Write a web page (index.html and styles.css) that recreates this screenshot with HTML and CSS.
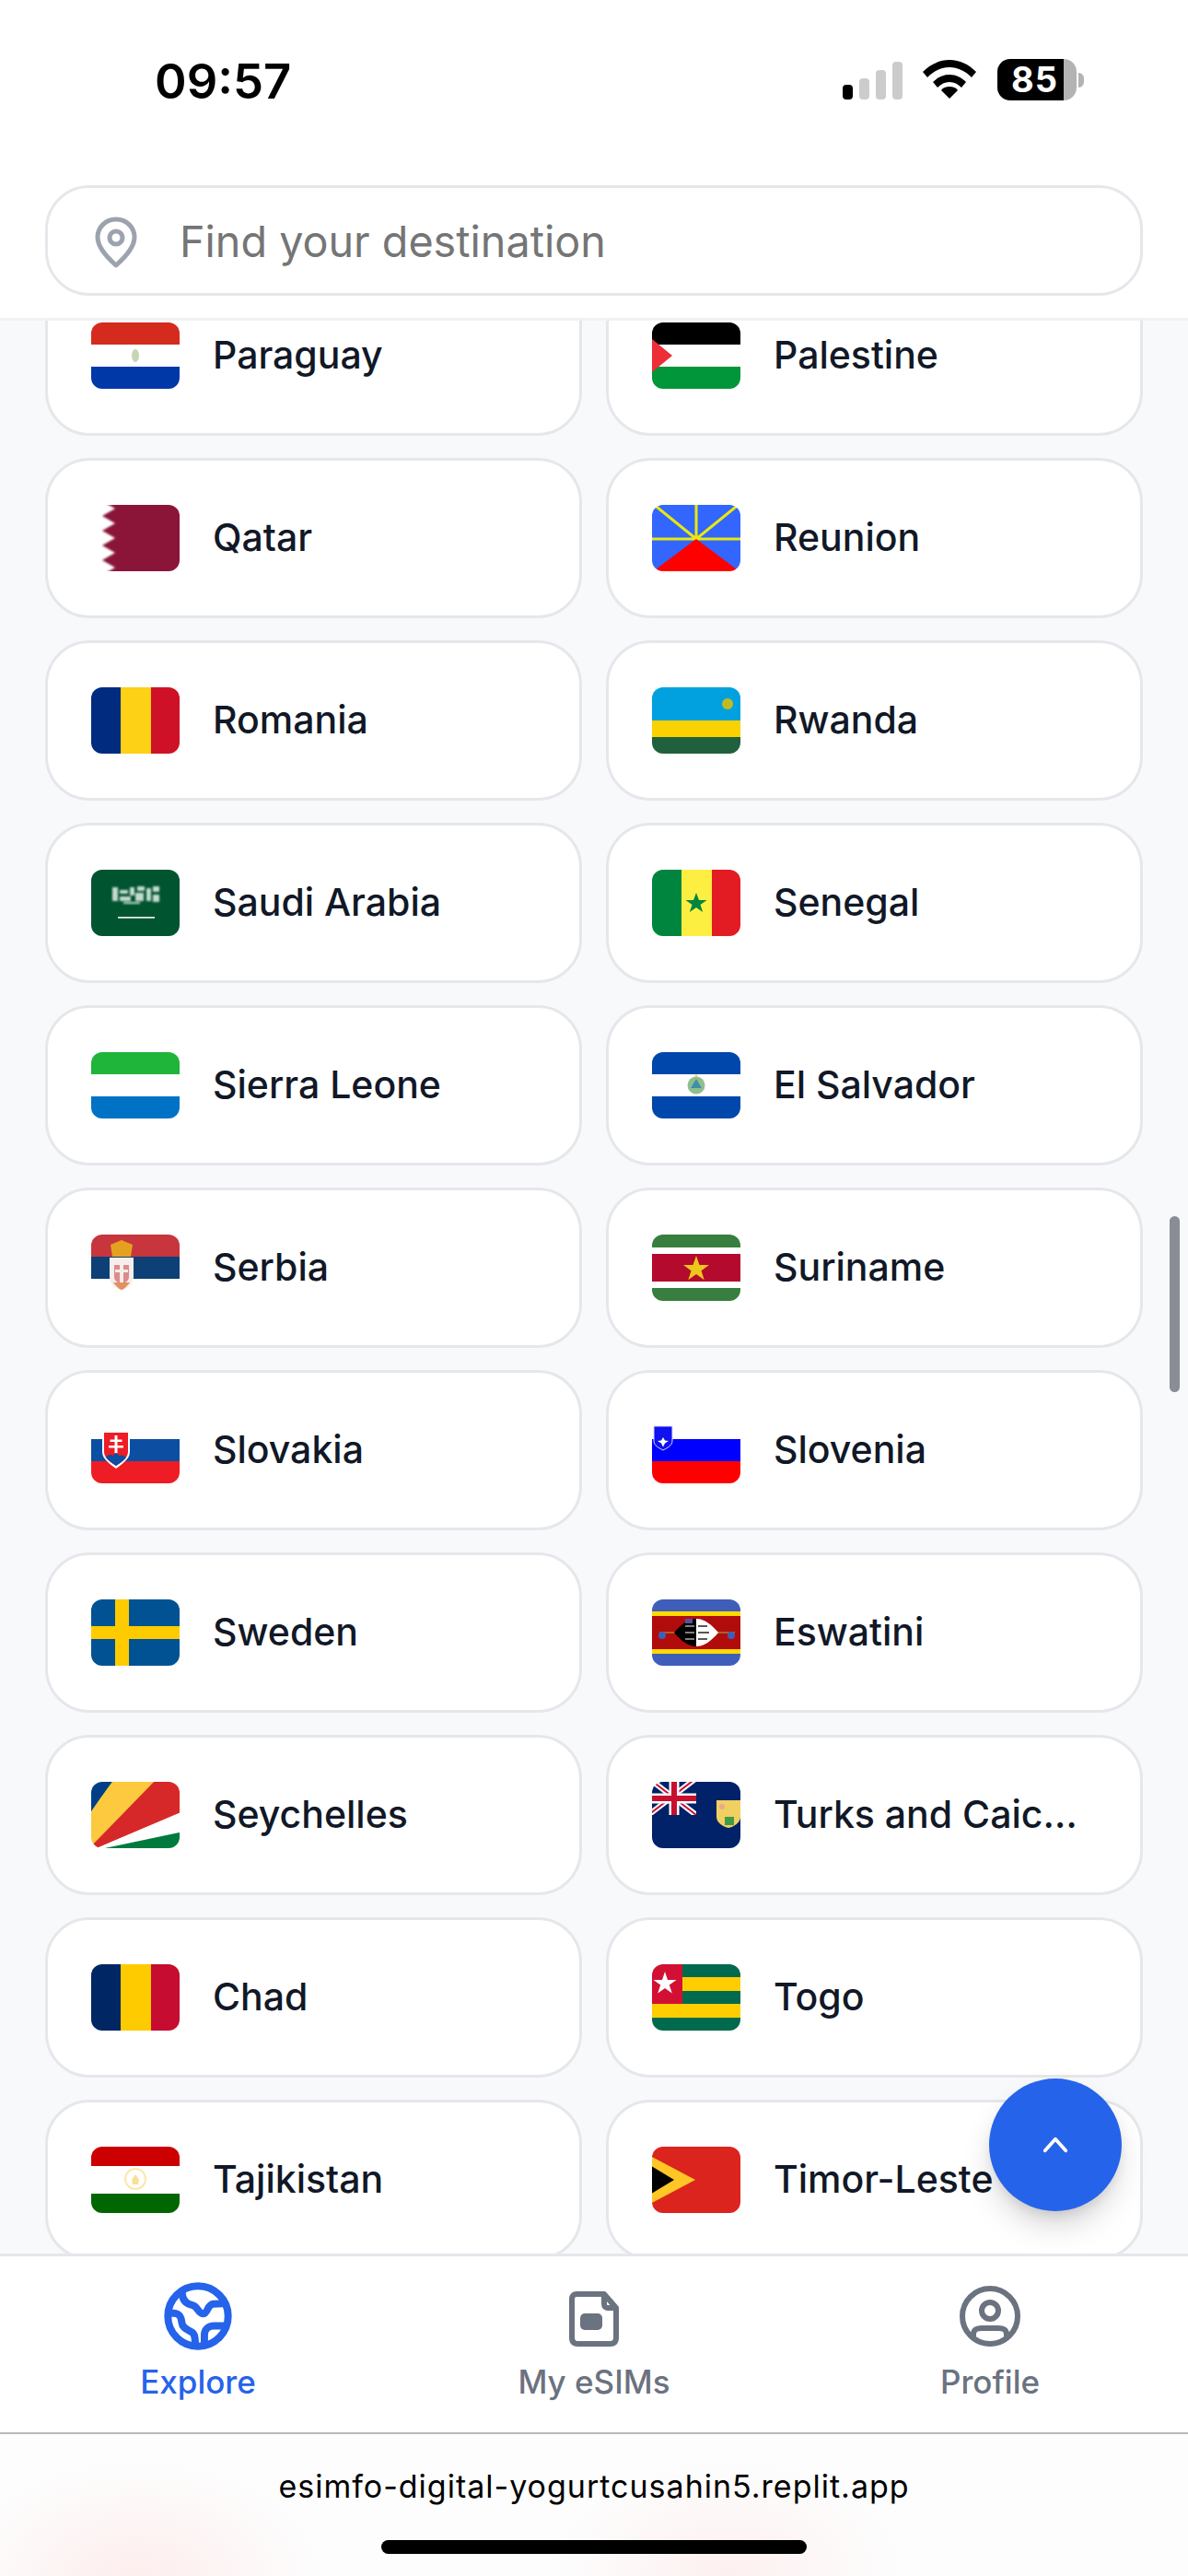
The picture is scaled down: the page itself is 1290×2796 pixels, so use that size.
FILE: index.html
```html
<!DOCTYPE html>
<html lang="en">
<head>
<meta charset="utf-8">
<title>Find your destination</title>
<link rel="stylesheet" href="styles.css">
</head>
<body>
<div class="app">
  <div class="status">
    <span class="time">09:57</span>
    <div class="status-icons">
      <div class="signal"><i class="bar b1"></i><i class="bar b2"></i><i class="bar b3"></i><i class="bar b4"></i></div>
      <svg class="wifi" viewBox="0 0 58 42"><path d="M0 13C8 5 18 0 29 0s21 5 29 13l-5 6C46 12 38 8 29 8s-17 4-24 11z"/><path d="M11 24c5-5 11-8 18-8s13 3 18 8l-5 6c-4-4-8-6-13-6s-9 2-13 6z"/><path d="M20 33c2-3 5-4 9-4s7 1 9 4l-9 9z"/></svg>
      <div class="battery"><div class="battery-body"><span class="battery-num">85</span></div><i class="battery-cap"></i></div>
    </div>
  </div>
  <header class="search-wrap">
    <div class="search">
      <svg class="pin" viewBox="0 0 46 56" fill="none" stroke="#9ca3af" stroke-width="5"><path d="M23 3C12 3 3 11.500 3 22.500 3 34 14 45 23 53c9-8 20-19 20-30.500C43 11.500 34 3 23 3z" stroke-linejoin="round"/><circle cx="23" cy="23" r="7"/></svg>
      <span class="placeholder">Find your destination</span>
    </div>
  </header>
  <main class="list-area">
    <div class="grid">
      <div class="card"><svg class="flag" viewBox="0 0 96 72"><g class="art"><rect x="-4" y="-4" width="104" height="28" fill="#d52b1e"/><rect x="-4" y="24" width="104" height="24" fill="#fff"/><rect x="-4" y="48" width="104" height="28" fill="#0038a8"/><ellipse cx="48" cy="36" rx="4" ry="7" fill="#c5d6b5"/></g></svg><span class="name">Paraguay</span></div>
      <div class="card"><svg class="flag" viewBox="0 0 96 72"><g class="art"><rect x="-4" y="-4" width="104" height="28" fill="#000"/><rect x="-4" y="24" width="104" height="24" fill="#fff"/><rect x="-4" y="48" width="104" height="28" fill="#009639"/><path d="M-4 18 0 18 22 36 0 54-4 54z" fill="#ed2e38"/></g></svg><span class="name">Palestine</span></div>
      <div class="card"><svg class="flag" viewBox="0 0 96 72"><g class="art soft"><rect x="-4" y="-4" width="104" height="80" fill="#fff"/><path d="M100-4V76H12L26 68 12 60 26 52 12 44 26 36 12 28 26 20 12 12 26 4 12-4z" fill="#8a1538"/></g></svg><span class="name">Qatar</span></div>
      <div class="card"><svg class="flag" viewBox="0 0 96 72"><g class="art"><rect x="-4" y="-4" width="104" height="80" fill="#3366ff"/><g stroke="#e8e810" stroke-width="3"><path d="M48 37H-4M48 37H100M48 37V-4M48 37 0-2M48 37 96-2"/></g><path d="M48 37 100 76H-4z" fill="#ff0000"/></g></svg><span class="name">Reunion</span></div>
      <div class="card"><svg class="flag" viewBox="0 0 96 72"><g class="art"><rect x="-4" y="-4" width="36" height="80" fill="#002b7f"/><rect x="32" y="-4" width="33" height="80" fill="#fcd116"/><rect x="65" y="-4" width="35" height="80" fill="#ce1126"/></g></svg><span class="name">Romania</span></div>
      <div class="card"><svg class="flag" viewBox="0 0 96 72"><g class="art"><rect x="-4" y="-4" width="104" height="40" fill="#00a1de"/><rect x="-4" y="36" width="104" height="18" fill="#fad201"/><rect x="-4" y="54" width="104" height="22" fill="#20603d"/><circle cx="82" cy="18" r="6" fill="#e5be01" opacity=".85"/></g></svg><span class="name">Rwanda</span></div>
      <div class="card"><svg class="flag" viewBox="0 0 96 72"><g class="art"><rect x="-4" y="-4" width="104" height="80" fill="#005430"/><g class="saudi" fill="#c4dace"><rect x="23" y="19" width="6" height="15"/><rect x="31" y="22" width="9" height="4"/><rect x="31" y="29" width="12" height="5"/><rect x="42" y="19" width="5" height="9"/><rect x="48" y="25" width="9" height="9"/><rect x="50" y="18" width="8" height="5"/><rect x="60" y="20" width="5" height="14"/><rect x="67" y="18" width="7" height="6"/><rect x="67" y="27" width="7" height="8"/><rect x="35" y="35" width="18" height="2"/></g><rect x="29" y="51" width="40" height="1.800" fill="#dfeae4"/></g></svg><span class="name">Saudi Arabia</span></div>
      <div class="card"><svg class="flag" viewBox="0 0 96 72"><g class="art"><rect x="-4" y="-4" width="36" height="80" fill="#00853f"/><rect x="32" y="-4" width="33" height="80" fill="#fdef42"/><rect x="65" y="-4" width="35" height="80" fill="#e31b23"/><path d="M48 25l3 8h8.500l-7 5 2.700 8L48 41l-7.200 5 2.700-8-7-5H45z" fill="#00853f"/></g></svg><span class="name">Senegal</span></div>
      <div class="card"><svg class="flag" viewBox="0 0 96 72"><g class="art"><rect x="-4" y="-4" width="104" height="28" fill="#1eb53a"/><rect x="-4" y="24" width="104" height="24" fill="#fff"/><rect x="-4" y="48" width="104" height="28" fill="#0072c6"/></g></svg><span class="name">Sierra Leone</span></div>
      <div class="card"><svg class="flag" viewBox="0 0 96 72"><g class="art"><rect x="-4" y="-4" width="104" height="28" fill="#0047ab"/><rect x="-4" y="24" width="104" height="24" fill="#fff"/><rect x="-4" y="48" width="104" height="28" fill="#0047ab"/><circle cx="48" cy="36" r="9.500" fill="#8fbf8f"/><path d="M48 29 54 39H42z" fill="#3f8fa8"/><circle cx="48" cy="26" r="1.500" fill="#e8c860"/></g></svg><span class="name">El Salvador</span></div>
      <div class="card"><svg class="flag" viewBox="0 0 96 72"><g class="art"><rect x="-4" y="-4" width="104" height="28" fill="#c6363c"/><rect x="-4" y="24" width="104" height="24" fill="#0c4076"/><rect x="-4" y="48" width="104" height="28" fill="#fff"/><path d="M21 11 33 6 45 11 43 24H23z" fill="#e4a11f"/><path d="M20 25H46V46C46 54 38 60 33 60 28 60 20 54 20 46z" fill="#f6eeec"/><path d="M25 33H41V46C41 50 37 53 33 53 29 53 25 50 25 46z" fill="#dd8a8c"/><path d="M31 31H35V54H31zM26 38H40V41H26z" fill="#f6eeec"/><path d="M24 52C27 56 31 60 33 60 35 60 39 56 42 52z" fill="#e0793a" opacity=".8"/></g></svg><span class="name">Serbia</span></div>
      <div class="card"><svg class="flag" viewBox="0 0 96 72"><g class="art"><rect x="-4" y="-4" width="104" height="18" fill="#377e3f"/><rect x="-4" y="14" width="104" height="7" fill="#fff"/><rect x="-4" y="21" width="104" height="30" fill="#b40a2d"/><rect x="-4" y="51" width="104" height="7" fill="#fff"/><rect x="-4" y="58" width="104" height="18" fill="#377e3f"/><path d="M48 23l3.500 10H62l-8.500 6.300 3.200 10L48 43l-8.700 6.300 3.200-10L34 33h10.500z" fill="#ecc81d"/></g></svg><span class="name">Suriname</span></div>
      <div class="card"><svg class="flag" viewBox="0 0 96 72"><g class="art"><rect x="-4" y="-4" width="104" height="28" fill="#fff"/><rect x="-4" y="24" width="104" height="24" fill="#0b4ea2"/><rect x="-4" y="48" width="104" height="28" fill="#ee1c25"/><path d="M12 15H42V38C42 46 32 52 27 56 22 52 12 46 12 38z" fill="#fff"/><path d="M14 17H40V38C40 45 31 50 27 53 23 50 14 45 14 38z" fill="#ee1c25"/><path d="M25.500 20h3v4.500h5v2.500h-5v4h6.500v2.500h-6.500v6h-3v-6H19v-2.500h6.500v-4h-5v-2.500h5z" fill="#fff"/><path d="M16 44c3-4 6-3 8-2 2-4 4-4 6 0 3-1 5-1 8 2-3 4-8 7-11 9-3-2-8-5-11-9z" fill="#0b4ea2"/></g></svg><span class="name">Slovakia</span></div>
      <div class="card"><svg class="flag" viewBox="0 0 96 72"><g class="art"><rect x="-4" y="-4" width="104" height="28" fill="#fff"/><rect x="-4" y="24" width="104" height="24" fill="#0000ff"/><rect x="-4" y="48" width="104" height="28" fill="#ff0000"/><path d="M2 10H22V26C22 31 16 34 12 36 8 34 2 31 2 26z" fill="#1010f0" stroke="#d8d8ff" stroke-width="1"/><path d="M12 22l2 3.500 4 .5-4 2.500-2 4-2-4-4-2.500 4-.5z" fill="#fff"/></g></svg><span class="name">Slovenia</span></div>
      <div class="card"><svg class="flag" viewBox="0 0 96 72"><g class="art"><rect x="-4" y="-4" width="104" height="80" fill="#005293"/><rect x="26" y="-4" width="15" height="80" fill="#fecb00"/><rect x="-4" y="29" width="104" height="14" fill="#fecb00"/></g></svg><span class="name">Sweden</span></div>
      <div class="card"><svg class="flag" viewBox="0 0 96 72"><g class="art"><rect x="-4" y="-4" width="104" height="80" fill="#3e5eb9"/><rect x="-4" y="13" width="104" height="46" fill="#ffd900"/><rect x="-4" y="18" width="104" height="36" fill="#b10c0c"/><path d="M8 36H90" stroke="#a8622a" stroke-width="2"/><circle cx="11" cy="39" r="4" fill="#3e5eb9"/><circle cx="86" cy="39" r="4" fill="#3e5eb9"/><path d="M24 36C34 24 42 21 48 21V51C42 51 34 48 24 36z" fill="#000"/><path d="M72 36C62 24 54 21 48 21V51C54 51 62 48 72 36z" fill="#fff"/><path d="M36 29H46M36 36H46M36 43H46" stroke="#aaa" stroke-width="1.500"/><path d="M50 29H60M50 36H62M50 43H60" stroke="#222" stroke-width="1.500"/><rect x="36" y="21" width="8" height="5" fill="#5a4ea0"/></g></svg><span class="name">Eswatini</span></div>
      <div class="card"><svg class="flag" viewBox="0 0 96 72"><g class="art"><rect x="-4" y="-4" width="104" height="80" fill="#007a3d"/><path d="M-4 76 100 30V54z" fill="#fff"/><path d="M-4 74-4 60 68-4H100V32L-4 76z" fill="#d62828"/><path d="M-4 74V36L26-4H72z" fill="#fcc93f"/><path d="M-4-4H25L-4 38z" fill="#003f87"/></g></svg><span class="name">Seychelles</span></div>
      <div class="card"><svg class="flag" viewBox="0 0 96 72"><g class="art"><rect x="-4" y="-4" width="104" height="80" fill="#012169"/><path d="M-4 -4 48 36M48 -4-4 36" stroke="#fff" stroke-width="6"/><path d="M-4 -4 48 36M48 -4-4 36" stroke="#c8102e" stroke-width="2"/><path d="M24-4V36M-4 18H48" stroke="#fff" stroke-width="11"/><path d="M24-4V36M-4 18H48" stroke="#c8102e" stroke-width="6"/><rect x="48" y="-4" width="4" height="44" fill="#012169"/><rect x="-4" y="36" width="56" height="4" fill="#012169"/><path d="M70 20H96V38C96 45 88 49 83 50 78 49 70 45 70 38z" fill="#f0d060"/><rect x="79" y="38" width="10" height="9" fill="#3f9a4a"/><circle cx="76" cy="27" r="3" fill="#e8a890"/></g></svg><span class="name">Turks and Caicos Islands</span></div>
      <div class="card"><svg class="flag" viewBox="0 0 96 72"><g class="art"><rect x="-4" y="-4" width="36" height="80" fill="#002664"/><rect x="32" y="-4" width="33" height="80" fill="#fecb00"/><rect x="65" y="-4" width="35" height="80" fill="#c60c30"/></g></svg><span class="name">Chad</span></div>
      <div class="card"><svg class="flag" viewBox="0 0 96 72"><g class="art"><rect x="-4" y="-4" width="104" height="18" fill="#006a4e"/><rect x="-4" y="14" width="104" height="15" fill="#ffce00"/><rect x="-4" y="29" width="104" height="14" fill="#006a4e"/><rect x="-4" y="43" width="104" height="15" fill="#ffce00"/><rect x="-4" y="58" width="104" height="18" fill="#006a4e"/><rect x="-4" y="-4" width="37" height="47" fill="#d21034"/><path d="M14 8l3 9h9.500l-7.700 5.500 3 9L14 26l-7.800 5.500 3-9L1.500 17H11z" fill="#fff"/></g></svg><span class="name">Togo</span></div>
      <div class="card"><svg class="flag" viewBox="0 0 96 72"><g class="art"><rect x="-4" y="-4" width="104" height="25" fill="#cc0000"/><rect x="-4" y="21" width="104" height="30" fill="#fff"/><rect x="-4" y="51" width="104" height="25" fill="#006600"/><circle cx="48" cy="35" r="11" fill="none" stroke="#f8d060" stroke-width="2" opacity=".5"/><path d="M44 36 48 30 52 36 51 41H45z" fill="#f8d060" opacity=".65"/></g></svg><span class="name">Tajikistan</span></div>
      <div class="card"><svg class="flag" viewBox="0 0 96 72"><g class="art"><rect x="-4" y="-4" width="104" height="80" fill="#dc241f"/><path d="M-4 9 47 36-4 63z" fill="#ffc726"/><path d="M-4 19 24 36-4 53z" fill="#000"/></g></svg><span class="name">Timor-Leste</span></div>
    </div>
    <div class="scrollbar"></div>
    <button class="fab" type="button" aria-label="Back to top"><svg class="fab-icon" viewBox="0 0 24 16" fill="none" stroke="#fff" stroke-width="3" stroke-linecap="round" stroke-linejoin="round"><path d="M3 13 12 3l9 10"/></svg></button>
  </main>
  <nav class="tabs">
    <div class="tab active">
      <svg class="tab-icon globe" viewBox="143 78 224 224" fill="none" stroke="currentColor" stroke-width="24"><circle cx="255" cy="190" r="99"/><path d="M203 112c0 26 14 38 34 42 18 4 18 28 36 28 14 0 12-30 32-32l45-2"/><path d="M156 180h18c22 0 26 14 28 32 2 18 20 22 32 30 10 6 12 16 12 44"/><path d="M348 222h-40c-20 0-32 12-32 30v36"/></svg>
      <span class="tab-label">Explore</span>
    </div>
    <div class="tab">
      <svg class="tab-icon sim" viewBox="0 0 54 60" fill="none" stroke="currentColor" stroke-width="6" stroke-linejoin="round"><path d="M8 3H38L51 18V50C51 54.500 49 57 45 57H9C5 57 3 54.500 3 50V8C3 5 5 3 8 3z"/><path d="M38 3V14C38 16.500 39.500 18 42 18H51"/><rect x="12" y="24" width="24" height="18" rx="5" fill="currentColor" stroke="none"/></svg>
      <span class="tab-label">My eSIMs</span>
    </div>
    <div class="tab">
      <svg class="tab-icon user" viewBox="0 0 66 66" fill="none" stroke="currentColor" stroke-width="6"><circle cx="33" cy="33" r="30"/><circle cx="33" cy="27" r="9"/><path d="M15 56V53C15 47 19 46 24 46H42C47 46 51 47 51 53V56"/></svg>
      <span class="tab-label">Profile</span>
    </div>
  </nav>
  <footer class="browser">
    <span class="url">esimfo-digital-yogurtcusahin5.replit.app</span>
    <div class="home"></div>
  </footer>
</div>
</body>
</html>
```

FILE: styles.css
```css
* { box-sizing: border-box; }
html, body { margin: 0; padding: 0; background: #fff; }
body { font-family: Inter, "Liberation Sans", sans-serif; }

.app {
  width: 1290px;
  height: 2796px;
  display: flex;
  flex-direction: column;
  overflow: hidden;
  background: #fff;
}

/* status bar */
.status {
  height: 153px;
  flex: none;
  display: flex;
  justify-content: space-between;
  align-items: flex-start;
  padding: 55px 113px 0 168px;
}
.time { font-size: 52.500px; line-height: 66px; font-weight: 600; color: #000; letter-spacing: 0; }
.status-icons { display: flex; align-items: flex-start; padding-top: 9px; }
.signal { display: flex; align-items: flex-end; gap: 7px; height: 42px; margin-top: 2px; }
.bar { display: block; width: 11px; border-radius: 4px; background: #ccc; }
.b1 { height: 16px; background: #000; }
.b2 { height: 23px; }
.b3 { height: 32px; }
.b4 { height: 41px; }
.wifi { width: 58px; height: 42px; margin: 1px 23px 0 22px; fill: #000; }
.battery { display: flex; align-items: center; height: 45px; }
.battery-body {
  width: 86px;
  height: 45px;
  border-radius: 14px;
  background: linear-gradient(90deg, #000 72px, #b3b3b3 72px);
  padding-left: 15px;
}
.battery-num { color: #fff; font-size: 38px; line-height: 45px; font-weight: 700; display: block; letter-spacing: 1px; }
.battery-cap { display: block; width: 6px; height: 16px; margin-left: 2px; border-radius: 0 8px 8px 0; background: #b3b3b3; }

/* search */
.search-wrap {
  flex: none;
  height: 195px;
  padding: 48px 49px 0;
  background: #fff;
  border-bottom: 3px solid #f0f1f4;
}
.search {
  height: 120px;
  display: flex;
  align-items: center;
  gap: 48px;
  padding-left: 51px;
  border: 3px solid #e5e7eb;
  border-radius: 48px;
  background: #fff;
}
.pin { width: 46px; height: 56px; flex: none; margin-top: 4px; }
.placeholder { font-size: 46.700px; color: #757575; font-weight: 400; padding-top: 2px; margin-left: -2px; }

/* list */
.list-area {
  flex: 1;
  min-height: 0;
  position: relative;
  overflow: hidden;
  background: #f8f9fb;
  padding: 0 49px;
}
.grid {
  margin-top: -49px;
  display: grid;
  grid-template-columns: 1fr 1fr;
  column-gap: 26px;
  row-gap: 24px;
}
.card {
  height: 174px;
  min-width: 0;
  display: flex;
  align-items: center;
  gap: 36px;
  padding: 0 47px;
  border: 3px solid #e5e7eb;
  border-radius: 48px;
  background: #fff;
}
.flag { width: 96px; height: 72px; flex: none; border-radius: 12px; overflow: hidden; display: block; }
.art { filter: blur(0.6px); }
.soft { filter: blur(1.2px); }
.saudi { filter: blur(1px); }
.name {
  font-size: 41px;
  font-weight: 500;
  color: #111827;
  white-space: nowrap;
  overflow: hidden;
  text-overflow: ellipsis;
  min-width: 0;
  line-height: 56px;
  padding-bottom: 3px;
}
.scrollbar {
  position: absolute;
  right: 9px;
  top: 972px;
  width: 11px;
  height: 191px;
  border-radius: 6px;
  background: #8a8d93;
}
.fab {
  position: absolute;
  left: 1074px;
  top: 1908px;
  width: 144px;
  height: 144px;
  padding: 0;
  border: 0;
  border-radius: 50%;
  background: #2563eb;
  box-shadow: 0 18px 36px -8px rgba(0, 0, 0, .22), 0 6px 14px -4px rgba(0, 0, 0, .1);
  display: flex;
  align-items: center;
  justify-content: center;
}
.fab-icon { width: 30px; height: 20px; display: block; }

/* tabs */
.tabs {
  flex: none;
  height: 194px;
  display: grid;
  grid-template-columns: repeat(3, 1fr);
  border-top: 3px solid #e5e7eb;
  background: #fff;
}
.tab {
  display: flex;
  flex-direction: column;
  align-items: center;
  color: #6b7280;
}
.tab.active { color: #2563eb; }
.tab-icon { display: block; flex: none; }
.globe { width: 74px; height: 74px; margin-top: 28px; }
.sim { width: 54px; height: 60px; margin-top: 38px; margin-bottom: 4px; }
.user { width: 66px; height: 66px; margin-top: 32px; margin-bottom: 4px; }
.tab-label { font-size: 35px; font-weight: 500; line-height: 44px; margin-top: 12px; }

/* browser chrome */
.browser {
  flex: none;
  height: 156px;
  position: relative;
  display: flex;
  flex-direction: column;
  align-items: center;
  border-top: 2px solid #b9b9bb;
  background:
    radial-gradient(ellipse 200px 130px at 150px 160px, rgba(255, 215, 215, .42), rgba(255, 255, 255, 0)),
    radial-gradient(ellipse 190px 120px at 790px 150px, rgba(255, 215, 215, .34), rgba(255, 255, 255, 0)),
    #fdfdfd;
}
.url { margin-top: 34px; font-size: 34px; line-height: 46px; color: #000; letter-spacing: 1px; }
.home {
  position: absolute;
  left: 414px;
  top: 115px;
  width: 462px;
  height: 15px;
  border-radius: 8px;
  background: #000;
}
```
